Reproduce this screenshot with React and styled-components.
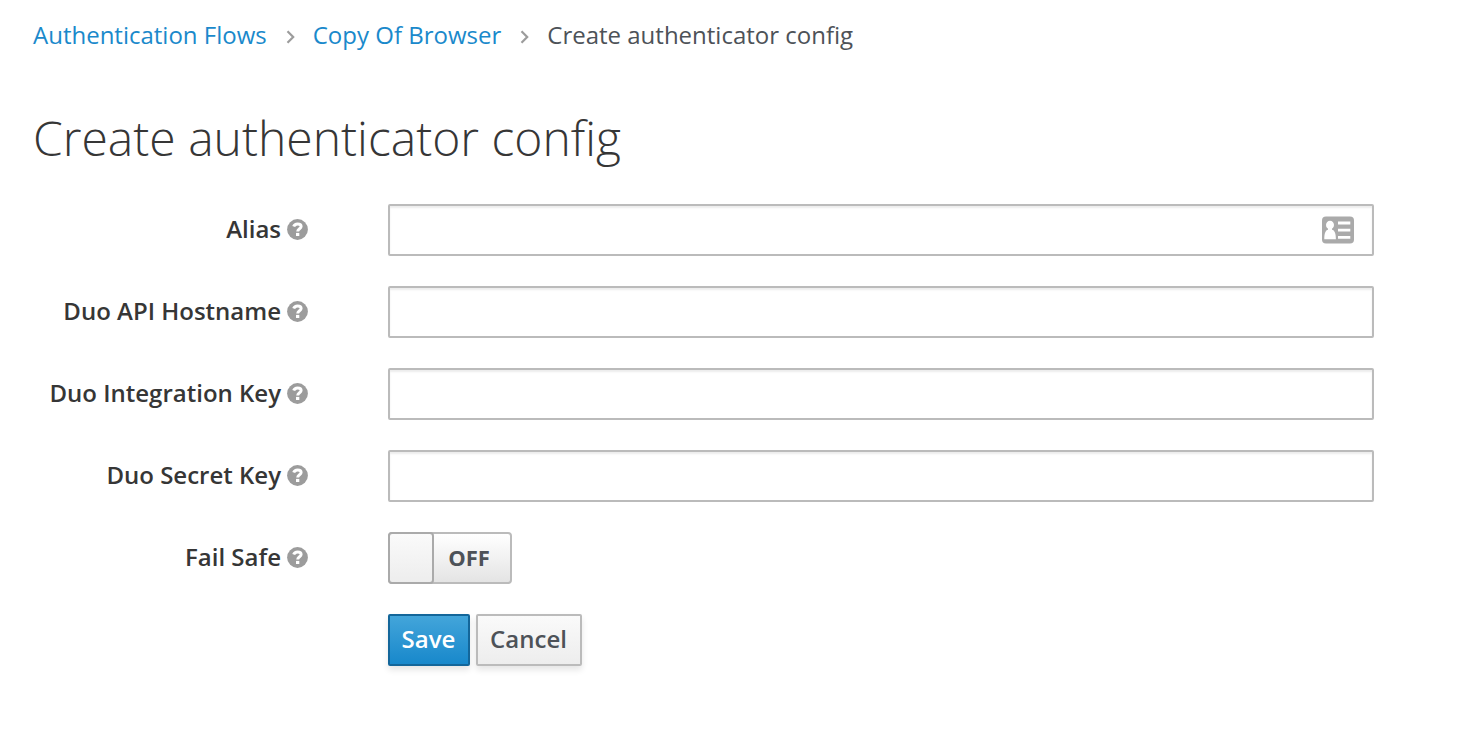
import React from "react";
import styled, { createGlobalStyle } from "styled-components";

const GlobalStyle = createGlobalStyle`
  *, *::before, *::after { box-sizing: border-box; }
  body {
    margin: 0;
    background: #fff;
    color: #363636;
    font-family: "Open Sans", "Noto Sans", sans-serif;
    font-size: 24px;
    line-height: 40px;
  }
`;

const Page = styled.main`
  min-height: 756px;
  padding: 15px 98px 0 33px;
`;

const Breadcrumb = styled.nav`
  display: flex;
  align-items: center;
  height: 40px;
  white-space: nowrap;
`;

const Crumb = styled.a`
  color: #1a89cb;
  text-decoration: none;
`;

const CurrentCrumb = styled.span`
  color: #4d5258;
`;

const Chevron = styled.svg`
  width: 9px;
  height: 14px;
  margin: 4px 18px 0 19px;
  fill: none;
  stroke: #9c9c9c;
  stroke-width: 2.2;
`;

const Title = styled.h1`
  margin: 56px 0 0;
  height: 53px;
  font-size: 48px;
  font-weight: 300;
  line-height: 53px;
  white-space: nowrap;
`;

const Form = styled.form`
  display: flex;
  flex-direction: column;
  gap: 30px;
  margin-top: 40px;
`;

const Row = styled.div`
  display: grid;
  grid-template-columns: 275px minmax(0, 1fr);
  column-gap: 80px;
  align-items: center;
  height: 52px;
`;

const Label = styled.label`
  grid-column: 1;
  display: flex;
  align-items: center;
  justify-content: flex-end;
  gap: 6px;
  padding-bottom: 3px;
  font-weight: 600;
  white-space: nowrap;
`;

const HelpSvg = styled.svg`
  width: 21px;
  height: 21px;
  margin-top: 1px;
`;

const Field = styled.div`
  grid-column: 2;
  display: flex;
  align-items: center;
  height: 52px;
  padding-right: 18px;
  border: 2px solid #bbb;
  border-radius: 2px;
  background: #fff;
  box-shadow: inset 0 2px 2px rgba(3, 3, 3, 0.075);
`;

const Input = styled.input`
  flex: 1;
  min-width: 0;
  height: 100%;
  padding: 0 12px;
  border: 0;
  outline: 0;
  background: transparent;
  font: inherit;
`;

const CardIcon = styled.svg`
  width: 32px;
  height: 28px;
`;

const Switch = styled.div`
  display: flex;
  width: 124px;
  height: 52px;
  border: 2px solid #bbb;
  border-radius: 4px;
  background: linear-gradient(#fff, #e4e4e4);
`;

const SwitchHandle = styled.span`
  width: 46px;
  height: 52px;
  margin: -2px 0 0 -2px;
  border: 2px solid #aaa;
  border-radius: 4px;
  background: linear-gradient(#fafafa, #ededed);
`;

const SwitchText = styled.span`
  flex: 1;
  padding-right: 6px;
  color: #4d5258;
  font-size: 22px;
  font-weight: 700;
  line-height: 46px;
  text-align: center;
`;

const Actions = styled.div`
  grid-column: 2;
  display: flex;
  gap: 6px;
`;

const Button = styled.button`
  width: ${({ $primary }) => ($primary ? 82 : 106)}px;
  height: 52px;
  padding: 0 1px 2px 0;
  border: 2px solid ${({ $primary }) => ($primary ? "#13669a" : "#bbb")};
  border-radius: 2px;
  background: ${({ $primary }) =>
    $primary ? "linear-gradient(#43a5da, #1888cb)" : "linear-gradient(#fafafa, #ededed)"};
  box-shadow: 0 4px 6px rgba(3, 3, 3, 0.1);
  color: ${({ $primary }) => ($primary ? "#fff" : "#4d5258")};
  font: 600 24px/40px "Open Sans", "Noto Sans", sans-serif;
`;

const fields = [
  { id: "alias", label: "Alias", card: true },
  { id: "hostname", label: "Duo API Hostname" },
  { id: "integration", label: "Duo Integration Key" },
  { id: "secret", label: "Duo Secret Key" },
];

function HelpIcon() {
  return (
    <HelpSvg viewBox="0 0 21 21" aria-hidden="true">
      <circle cx="10.5" cy="10.5" r="10.4" fill="#9c9c9c" />
      <path
        d="M6.700 7.500C7.300 5.700 8.700 4.900 10.600 4.900c2.200 0 3.500 1 3.500 2.700 0 2.200-3.400 2.300-3.400 5"
        fill="none"
        stroke="#fff"
        strokeWidth="3"
      />
      <rect x="9" y="13.900" width="3.300" height="3.100" fill="#fff" />
    </HelpSvg>
  );
}

function Separator() {
  return (
    <Chevron viewBox="0 0 9 14" aria-hidden="true">
      <path d="M1.500 1.300 7.200 7 1.500 12.700" />
    </Chevron>
  );
}

function ContactCard() {
  return (
    <CardIcon viewBox="0 0 32 28" aria-hidden="true">
      <rect y="0.5" width="32" height="27" rx="4" fill="#aaa" />
      <ellipse cx="8" cy="9" rx="4" ry="4.300" fill="#fff" />
      <path
        fill="#fff"
        d="M6 12h4v1.700c2.600.6 3.900 3.300 3.900 9.600H2.300c0-6.300 1.200-9 3.700-9.600z"
      />
      <path stroke="#fff" strokeWidth="2.800" d="M16 7h12.300M16 14.200h12.300M16 21.300h12.300" />
    </CardIcon>
  );
}

export default function App() {
  return (
    <>
      <GlobalStyle />
      <Page>
        <Breadcrumb>
          <Crumb>Authentication Flows</Crumb>
          <Separator />
          <Crumb>Copy Of Browser</Crumb>
          <Separator />
          <CurrentCrumb>Create authenticator config</CurrentCrumb>
        </Breadcrumb>
        <Title>Create authenticator config</Title>
        <Form onSubmit={(event) => event.preventDefault()}>
          {fields.map(({ id, label, card }) => (
            <Row key={id}>
              <Label htmlFor={id}>
                {label}
                <HelpIcon />
              </Label>
              <Field>
                <Input id={id} type="text" />
                {card && <ContactCard />}
              </Field>
            </Row>
          ))}
          <Row>
            <Label>
              Fail Safe
              <HelpIcon />
            </Label>
            <Switch role="switch" aria-checked="false">
              <SwitchHandle />
              <SwitchText>OFF</SwitchText>
            </Switch>
          </Row>
          <Row>
            <Actions>
              <Button type="submit" $primary>
                Save
              </Button>
              <Button type="button">Cancel</Button>
            </Actions>
          </Row>
        </Form>
      </Page>
    </>
  );
}
